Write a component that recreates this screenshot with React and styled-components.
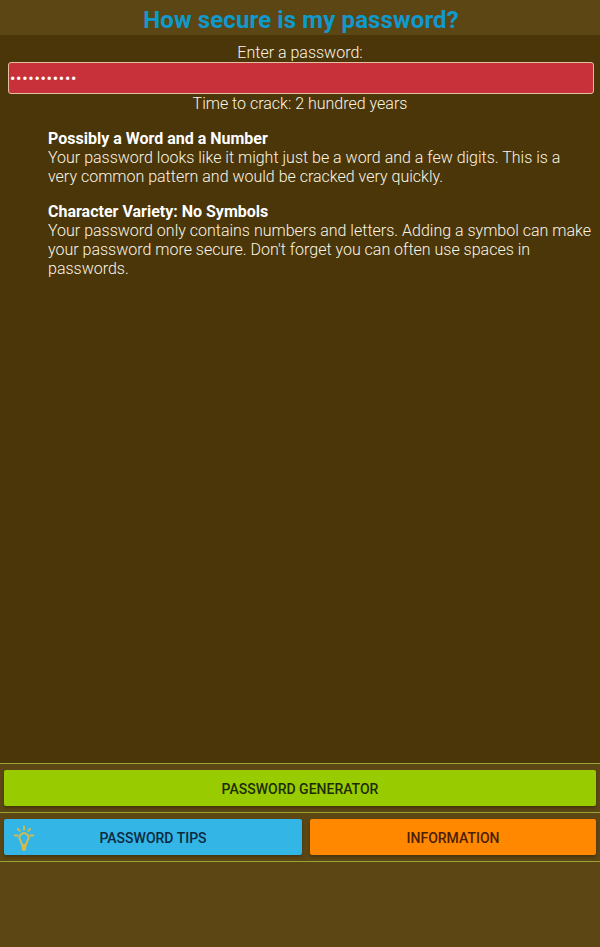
import React from 'react'
import styled, { createGlobalStyle } from 'styled-components'

const GlobalStyle = createGlobalStyle`
    html, body {
        margin: 0;
        padding: 0;
        height: 100%;
    }
    #root {
        height: 100%;
    }
`

const Page = styled.div`
    display: flex;
    flex-direction: column;
    width: 600px;
    height: 947px;
    overflow: hidden;
    background: #4a3609;
    color: #fbf5e6;
    font-family: Roboto, "Liberation Sans", sans-serif;
    font-size: 16px;
    font-weight: 300;
`

const Header = styled.header`
    height: 35px;
    flex-shrink: 0;
    background: #5c4614;
`

const Title = styled.h1`
    margin: 0;
    padding-left: 2px;
    text-align: center;
    font-size: 24px;
    line-height: 40px;
    font-weight: 700;
    letter-spacing: 0.12px;
    color: #0f99cc;
`

const Main = styled.main`
    flex: 1;
    padding-top: 8px;
`

const Label = styled.div`
    text-align: center;
    line-height: 19px;
`

const PasswordInput = styled.input`
    display: block;
    box-sizing: border-box;
    width: 586px;
    height: 32px;
    margin: 0 6px 0 8px;
    padding: 0 1px;
    border: 1px solid #e3c0a0;
    border-radius: 3px;
    outline: none;
    background: #c8313a;
    color: #fff;
    font-family: Roboto, "Liberation Sans", sans-serif;
    font-size: 16px;
    letter-spacing: 0.7px;
`

const Tips = styled.ul`
    list-style: none;
    margin: 16px 8px 0 48px;
    padding: 0;
`

const Tip = styled.li`
    line-height: 19px;
    margin-bottom: 16px;
`

const TipTitle = styled.div`
    font-weight: 700;
    color: #fff;
`

const Footer = styled.footer`
    flex-shrink: 0;
    height: 184px;
    box-sizing: border-box;
    background: #5c4614;
`

const Row = styled.div`
    display: flex;
    gap: 8px;
    height: 49px;
    box-sizing: border-box;
    padding: 6px 4px 0;
    border-top: 1px solid #98a535;
`

const Button = styled.button`
    position: relative;
    flex: ${props => props.$grow || 1} 1 0;
    height: 36px;
    padding: 1px 0 0;
    border: none;
    border-radius: 2px;
    background: ${props => props.$color};
    box-shadow: 0 2px 3px rgba(0, 0, 0, 0.25);
    color: ${props => props.$ink};
    font-family: Roboto, "Liberation Sans", sans-serif;
    font-size: 14px;
    font-weight: 500;
`

const BulbIcon = styled.svg`
    position: absolute;
    left: 9px;
    top: 6px;
    width: 22px;
    height: 26px;
`

function Bulb() {
    return (
        <BulbIcon viewBox="0 0 22 26" fill="none" stroke="#d6bb4a" strokeWidth="1.9" strokeLinecap="round" strokeLinejoin="round">
            <path d="M7.200 15a4.500 4.500 0 1 1 7.600 0c-.9 1.700-1.600 3.200-1.900 5.200h-3.800c-.3-2-1-3.500-1.900-5.200z" />
            <path d="M9.300 20.500h3.400L11.700 25h-1.400z" fill="#d6bb4a" />
            <path d="M11 1.500v3M5 4l1.800 1.800M17 4l-1.800 1.800M1.800 10.500h2.700M17.500 10.500h2.700" />
        </BulbIcon>
    )
}

export default function App() {
    return (
        <Page>
            <GlobalStyle />
            <Header>
                <Title>How secure is my password?</Title>
            </Header>
            <Main>
                <Label>Enter a password:</Label>
                <PasswordInput type="password" defaultValue="password123" readOnly />
                <Label>Time to crack: 2 hundred years</Label>
                <Tips>
                    <Tip>
                        <TipTitle>Possibly a Word and a Number</TipTitle>
                        Your password looks like it might just be a word and a few digits. This is a very common pattern and would be cracked very quickly.
                    </Tip>
                    <Tip>
                        <TipTitle>Character Variety: No Symbols</TipTitle>
                        Your password only contains numbers and letters. Adding a symbol can make your password more secure. Don't forget you can often use spaces in passwords.
                    </Tip>
                </Tips>
            </Main>
            <Footer>
                <Row>
                    <Button $color="#99cc00" $ink="#1d2c06">PASSWORD GENERATOR</Button>
                </Row>
                <Row>
                    <Button $grow={298} $color="#33b5e5" $ink="#0c2a3f">
                        <Bulb />
                        PASSWORD TIPS
                    </Button>
                    <Button $grow={286} $color="#ff8800" $ink="#4a1f05">INFORMATION</Button>
                </Row>
                <Row />
            </Footer>
        </Page>
    )
}
